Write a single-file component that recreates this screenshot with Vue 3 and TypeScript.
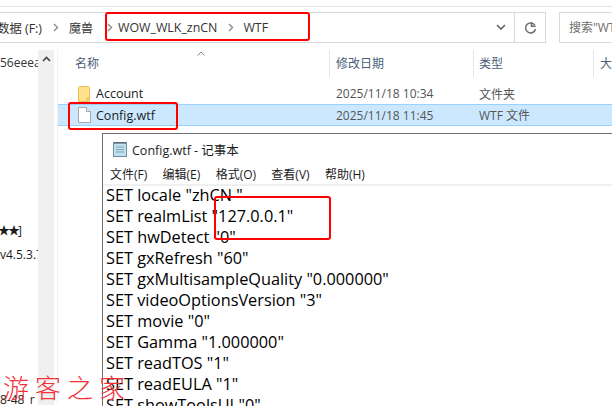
<script setup lang="ts">
const lines = [
  'SET locale "zhCN "',
  'SET realmList "127.0.0.1"',
  'SET hwDetect "0"',
  'SET gxRefresh "60"',
  'SET gxMultisampleQuality "0.000000"',
  'SET videoOptionsVersion "3"',
  'SET movie "0"',
  'SET Gamma "1.000000"',
  'SET readTOS "1"',
  'SET readEULA "1"',
  'SET showToolsUI "0"',
]
const menus = ['文件(F)', '编辑(E)', '格式(O)', '查看(V)', '帮助(H)']
</script>

<template>
  <div class="screen">
    <header class="toolbar">
      <div class="address">
        <div class="crumbs">
          <span class="crumb-a">数据 (F:)</span>
          <svg class="chev" width="6" height="9" viewBox="0 0 6 9"><path d="M1 1l3.5 3.5L1 8" fill="none" stroke="#8a8a8a" stroke-width="1.4" /></svg>
          <span class="crumb-b">魔兽</span>
          <svg class="chev chev-b" width="6" height="9" viewBox="0 0 6 9"><path d="M1 1l3.5 3.5L1 8" fill="none" stroke="#8a8a8a" stroke-width="1.4" /></svg>
          <span class="crumb-c">WOW_WLK_znCN</span>
          <svg class="chev chev-c" width="6" height="9" viewBox="0 0 6 9"><path d="M1 1l3.5 3.5L1 8" fill="none" stroke="#8a8a8a" stroke-width="1.4" /></svg>
          <span class="crumb-d">WTF</span>
        </div>
        <button class="drop">
          <svg width="10" height="7" viewBox="0 0 10 7"><path d="M1 1l4 4 4-4" fill="none" stroke="#666" stroke-width="1.6" /></svg>
        </button>
        <button class="refresh">
          <svg width="13" height="14" viewBox="0 0 13 14"><path d="M10.800 4.200A5 5 0 1 0 11.500 8" fill="none" stroke="#6e6e6e" stroke-width="1.500" /><path d="M7.500 1v4.200h4.200" fill="none" stroke="#6e6e6e" stroke-width="1.400" /></svg>
        </button>
      </div>
      <div class="search">搜索"WTF"</div>
    </header>

    <div class="content">
      <aside class="nav">
        <div class="nav-list">
          <div class="n1">56eeeaa</div>
          <div class="n2">★★]</div>
          <div class="n3">v4.5.3.7</div>
          <div class="n4">8-48_r</div>
        </div>
        <div class="scroll">
          <svg width="9" height="6" viewBox="0 0 9 6"><path d="M1 5l3.500-3.500L8 5" fill="none" stroke="#444" stroke-width="1.600" /></svg>
        </div>
      </aside>
      <main class="files">
        <div class="sort">
          <svg width="8" height="5" viewBox="0 0 8 5"><path d="M.5 4.500L4 1l3.500 3.500" fill="none" stroke="#888" /></svg>
        </div>
        <div class="head row">
          <div class="c-name">名称</div>
          <div class="c-date">修改日期</div>
          <div class="c-type">类型</div>
          <div class="c-size">大</div>
        </div>
        <div class="row item">
          <div class="c-name named">
            <svg width="13" height="16" viewBox="0 0 13 16"><path d="M.5 1.500a1 1 0 0 1 1-1h9a1 1 0 0 1 1 1v14h-11z" fill="#ffe08c" stroke="#e6c05c" /><path d="M9 15v-3h3" fill="#f7cf6c" stroke="#e6c05c" /></svg>
            <span>Account</span>
          </div>
          <div class="c-date">2025/11/18 10:34</div>
          <div class="c-type">文件夹</div>
        </div>
        <div class="row item selected">
          <div class="c-name named">
            <svg width="13" height="16" viewBox="0 0 13 16"><path d="M.5.500h8l4 4v11H.5z" fill="#fff" stroke="#a8a8a8" /><path d="M8.500.500v4h4" fill="#eee" stroke="#a8a8a8" /></svg>
            <span>Config.wtf</span>
          </div>
          <div class="c-date">2025/11/18 11:45</div>
          <div class="c-type">WTF 文件</div>
        </div>
      </main>
    </div>

    <section class="notepad">
      <div class="title">
        <svg width="16" height="16" viewBox="0 0 16 16"><rect x="1.500" y="1.500" width="13" height="14" fill="#bfe0ec" stroke="#6f8f9c" /><path d="M3 1v2M5 1v2M7 1v2M9 1v2M11 1v2M13 1v2" stroke="#445" /><path d="M4 6h8M4 8.500h8M4 11h8" stroke="#7fa7b6" /></svg>
        <span>Config.wtf - 记事本</span>
      </div>
      <nav class="menu">
        <span v-for="m in menus" :key="m">{{ m }}</span>
      </nav>
      <div class="text">
        <div v-for="l in lines" :key="l">{{ l }}</div>
      </div>
    </section>

    <i class="mark m1"></i>
    <i class="mark m2"></i>
    <i class="mark m3"></i>
    <div class="water">游客之家</div>
  </div>
</template>

<style scoped>
.screen {
  position: relative;
  width: 612px;
  height: 406px;
  overflow: hidden;
  background: #fff;
  font-family: "Open Sans", "Noto Sans CJK SC", sans-serif;
  color: #1c1c1c;
}
.toolbar {
  display: flex;
  gap: 13px;
  height: 44px;
  box-sizing: border-box;
  margin-top: 6px;
  padding-top: 5px;
  border-top: 1px solid #e2e2e2;
  font-size: 12px;
}
.address {
  display: flex;
  width: 546px;
  height: 31px;
  box-sizing: border-box;
  border: 1px solid #d9d9d9;
  border-left: 0;
}
.crumbs {
  flex: 1;
  display: flex;
  align-items: center;
  white-space: nowrap;
  font-size: 12.400px;
  color: #333;
  overflow: hidden;
}
.crumb-a { margin-left: -3px; }
.chev { margin: 0 0 0 11px; }
.crumb-b { margin-left: 10px; font-size: 12px; }
.chev-b { margin-left: 14px; }
.crumb-c { margin-left: 5px; }
.chev-c { margin-left: 11px; }
.crumb-d { margin-left: 9px; }
.drop, .refresh {
  display: flex;
  align-items: center;
  justify-content: center;
  padding: 0;
  background: none;
  border: 0;
}
.drop { width: 27px; }
.refresh { width: 31px; border-left: 1px solid #d9d9d9; }
.search {
  flex: 1;
  height: 31px;
  box-sizing: border-box;
  border: 1px solid #d9d9d9;
  border-right: 0;
  padding-left: 9px;
  line-height: 29px;
  color: #6d6d6d;
  white-space: nowrap;
  overflow: hidden;
}
.content {
  display: flex;
  height: 355px;
}
.nav {
  display: flex;
  width: 57px;
  flex: none;
  border-right: 1px solid #f2f2f2;
}
.nav-list {
  width: 38px;
  font-size: 12px;
  white-space: nowrap;
  overflow: hidden;
  flex: none;
}
.n1 { margin-top: 4px; line-height: 18px; color: #333; }
.n2 { margin-top: 150px; margin-left: -2px; letter-spacing: -2px; line-height: 18px; }
.n3 { margin-top: 6px; line-height: 18px; }
.n4 { margin-top: 127px; line-height: 18px; }
.scroll {
  width: 16px;
  background: #f0f0f0;
  display: flex;
  justify-content: center;
  padding-top: 6px;
  box-sizing: border-box;
}
.files {
  position: relative;
  flex: 1;
  min-width: 0;
}
.sort {
  position: absolute;
  left: 139px;
  top: 1px;
  line-height: 0;
}
.sort svg { display: block; }
.row {
  display: flex;
  align-items: center;
  font-size: 12px;
  white-space: nowrap;
}
.head {
  height: 27px;
  margin-bottom: 6px;
  color: #4c607a;
}
.head > div {
  height: 27px;
  line-height: 27px;
  border-right: 1px solid #e5e5e5;
  box-sizing: border-box;
}
.head .c-size { border: 0; }
.c-name {
  width: 272px;
  padding-left: 17px;
  box-sizing: border-box;
  flex: none;
}
.c-date {
  width: 144px;
  padding-left: 6px;
  box-sizing: border-box;
  flex: none;
  color: #555;
}
.head .c-date { color: #4c607a; }
.c-type {
  width: 120px;
  padding-left: 5px;
  box-sizing: border-box;
  flex: none;
  color: #555;
}
.head .c-type { color: #4c607a; }
.c-size { padding-left: 6px; }
.item { height: 21px; }
.named {
  display: flex;
  align-items: center;
  gap: 5px;
  padding-left: 20px;
  color: #1c1c1c;
  font-size: 12.500px;
}
.selected {
  height: 22px;
  background: #cce8ff;
  border-top: 1px solid #99d1ff;
  border-bottom: 1px solid #99d1ff;
  box-sizing: border-box;
}
.notepad {
  position: absolute;
  left: 102px;
  top: 133px;
  right: -2px;
  bottom: -2px;
  background: #fff;
  border: 1px solid #6e6e6e;
  box-sizing: border-box;
}
.title {
  display: flex;
  align-items: center;
  gap: 4px;
  height: 30px;
  padding-left: 9px;
  font-size: 12.500px;
}
.menu {
  display: flex;
  gap: 15.300px;
  height: 20px;
  align-items: center;
  padding-left: 7px;
  font-size: 12px;
  border-bottom: 2px solid #f0f0f0;
}
.text {
  margin-top: -1px;
  padding: 0 0 0 3px;
  font-size: 16.300px;
  line-height: 21px;
  color: #000;
  white-space: pre;
}
.mark {
  position: absolute;
  border: 2px solid #f00;
  border-radius: 3px;
  box-sizing: border-box;
}
.m1 { left: 105px; top: 12px; width: 205px; height: 29px; }
.m2 { left: 68px; top: 102px; width: 110px; height: 28px; }
.m3 { left: 214px; top: 196px; width: 117px; height: 44px; }
.water {
  position: absolute;
  left: 3px;
  top: 369px;
  font-family: "Noto Sans CJK SC", sans-serif;
  font-weight: 300;
  font-size: 26px;
  line-height: 36px;
  letter-spacing: 6px;
  color: #f2323a;
  white-space: nowrap;
}
</style>
